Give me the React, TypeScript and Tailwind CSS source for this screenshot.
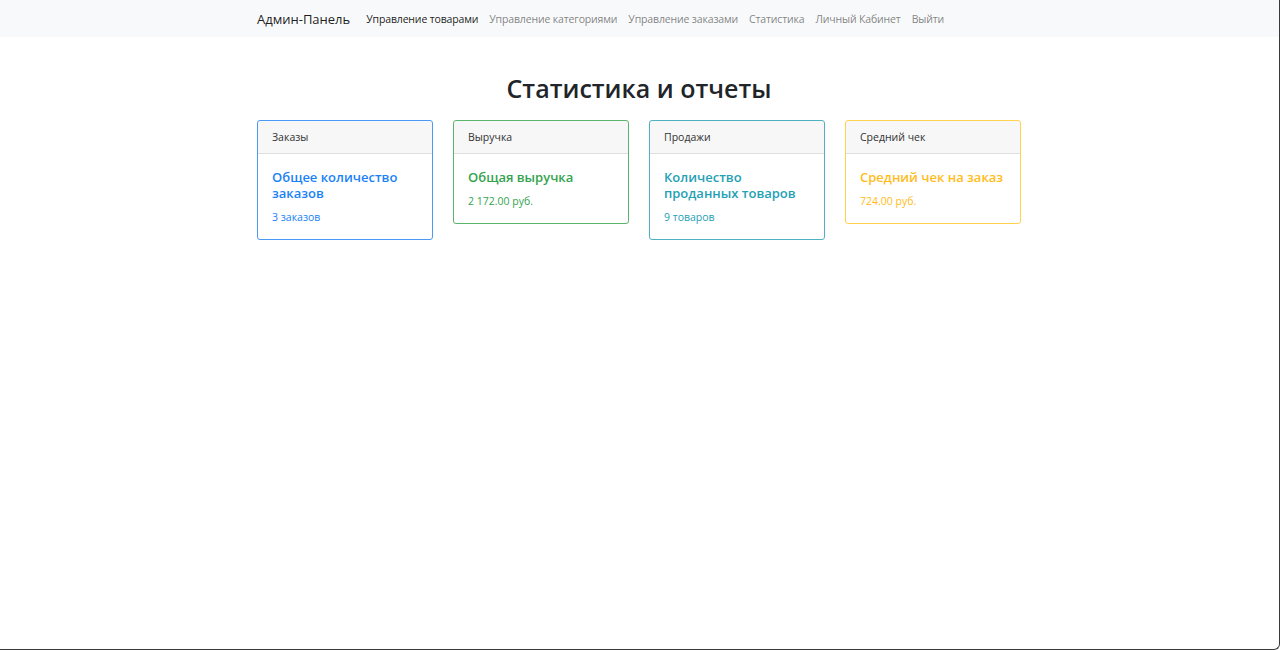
const links = [
  { label: "Управление товарами", active: true },
  { label: "Управление категориями" },
  { label: "Управление заказами" },
  { label: "Статистика" },
  { label: "Личный Кабинет" },
  { label: "Выйти" },
];

const cards = [
  {
    header: "Заказы",
    title: "Общее количество заказов",
    value: "3 заказов",
    box: "rounded-[3px] border border-solid border-[color:#4a9af5] bg-white",
    text: "text-[#1a82f7]",
  },
  {
    header: "Выручка",
    title: "Общая выручка",
    value: "2 172.00 руб.",
    box: "rounded-[3px] border border-solid border-[color:#59b56c] bg-white",
    text: "text-[#34a34f]",
  },
  {
    header: "Продажи",
    title: "Количество проданных товаров",
    value: "9 товаров",
    box: "rounded-[3px] border border-solid border-[color:#4fb2c2] bg-white",
    text: "text-[#24a1b5]",
  },
  {
    header: "Средний чек",
    title: "Средний чек на заказ",
    value: "724.00 руб.",
    box: "rounded-[3px] border border-solid border-[color:#ffd24f] bg-white",
    text: "text-[#ffbc1a]",
  },
];

export default function App() {
  return (
    <div className="h-[650px] overflow-hidden rounded-br-[6px] border-r border-b border-[#3a3a3a] bg-white font-['Open_Sans',sans-serif] text-[#212529]">
      {/* Navbar */}
      <nav className="h-[37px] bg-[#f8f9fa] pt-[2px]">
        <div className="ml-[257px] flex h-full w-[764px] items-center">
          <span className="mr-[16px] text-[13px] text-[rgba(0,0,0,0.9)]">Админ-Панель</span>
          <ul className="flex items-center gap-[11px]">
            {links.map((l) => (
              <li
                key={l.label}
                className={`text-[10.5px] tracking-[-0.15px] ${
                  l.active ? "text-[rgba(0,0,0,0.9)]" : "text-[rgba(0,0,0,0.5)]"
                }`}
              >
                {l.label}
              </li>
            ))}
          </ul>
        </div>
      </nav>

      <main className="ml-[257px] w-[764px]">
        <h1 className="mt-[35px] mb-[16px] text-center text-[25px] leading-[32px] font-semibold">
          Статистика и отчеты
        </h1>

        <div className="grid grid-cols-4 items-start gap-[20px]">
          {cards.map((c) => (
            <div key={c.header} className={c.box}>
              <div className="h-[33px] rounded-t-[3px] border-b border-[rgba(0,0,0,0.1)] bg-[rgba(0,0,0,0.03)] px-[14px] text-[10.5px] leading-[33px] text-[#333]">
                {c.header}
              </div>
              <div className={`px-[14px] pt-[15px] pb-[14px] ${c.text}`}>
                <h5 className="mb-[9px] text-[13px] leading-[16px] font-semibold">{c.title}</h5>
                <p className="text-[10.5px] leading-[15px]">{c.value}</p>
              </div>
            </div>
          ))}
        </div>
      </main>
    </div>
  );
}
